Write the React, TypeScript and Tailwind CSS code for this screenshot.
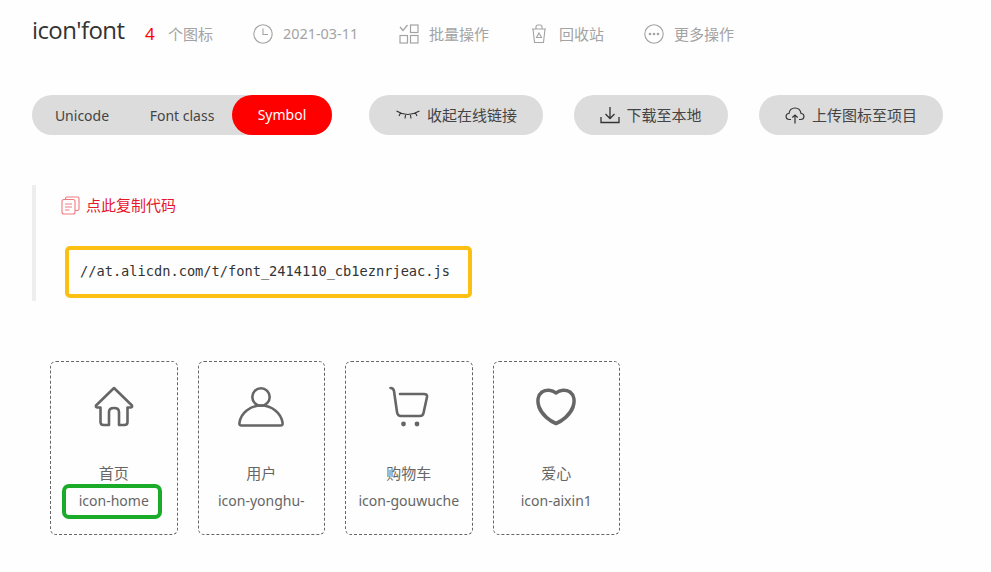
import React from "react";

const sans = "font-['Noto_Sans','Noto_Sans_CJK_SC',sans-serif]";

const cards = [
  {
    name: "首页",
    code: "icon-home",
    icon: (
      <svg width="40" height="42" viewBox="0 0 40 42" fill="none" stroke="#666" strokeWidth="2.6" strokeLinejoin="round" strokeLinecap="round">
        <path d="M20 2 L38 19.5 Q38.5 21.5 36.5 21.5 L33.5 21.5 L33.5 36 Q33.5 39 30.5 39 L25 39 L25 26 Q25 22 20 22 Q15 22 15 26 L15 39 L9.5 39 Q6.5 39 6.5 36 L6.5 21.5 L3.5 21.5 Q1.5 21.5 2 19.5 Z" />
      </svg>
    ),
  },
  {
    name: "用户",
    code: "icon-yonghu-",
    icon: (
      <svg width="46" height="42" viewBox="0 0 46 42" fill="none" stroke="#666" strokeWidth="2.6" strokeLinejoin="round">
        <circle cx="23" cy="11" r="8.7" />
        <path d="M3 39.5 Q1 39.5 1.5 36.5 C3 27 12 19.5 23 19.5 C34 19.5 43 27 44.5 36.5 Q45 39.5 43 39.5 Z" />
      </svg>
    ),
  },
  {
    name: "购物车",
    code: "icon-gouwuche",
    icon: (
      <svg width="40" height="42" viewBox="0 0 40 42" fill="none" stroke="#666" strokeWidth="2.6" strokeLinecap="round" strokeLinejoin="round">
        <path d="M1.5 2 Q4.5 2 5 5 L8 26 Q8.5 30 12 30 L31 30 Q34 30 34.5 27 L38 11 Q38.5 8 35 8 L11 8" />
        <circle cx="14.5" cy="38" r="2.4" fill="#666" stroke="none" />
        <circle cx="28" cy="38" r="2.4" fill="#666" stroke="none" />
      </svg>
    ),
  },
  {
    name: "爱心",
    code: "icon-aixin1",
    icon: (
      <svg width="40" height="38" viewBox="0 0 40 38" fill="none" stroke="#666" strokeWidth="3.6" strokeLinejoin="round">
        <path d="M20 5 C24 1.5 30 1.5 34 4 C38 7 39 13 37 19 C34 27 26 33 20 35.5 C14 33 6 27 3 19 C1 13 2 7 6 4 C10 1.5 16 1.5 20 5 Z" />
      </svg>
    ),
  },
];

export default function App() {
  return (
    <div className={`${sans} w-[991px] h-[572px] overflow-hidden bg-[#fefefe] pl-[32px] pt-[18px]`}>
      {/* header */}
      <div className="flex items-center h-[32px] text-[15px] text-[#a3a3a3]">
        <span className="mb-[8px] w-[93px] whitespace-nowrap text-[24px] leading-none text-[#333] tracking-[-0.6px] font-['Open_Sans',sans-serif]">icon'font</span>
        <span className="ml-[20px] w-[10px] text-[17px] text-[#f00]">4</span>
        <span className="ml-[13px]">个图标</span>
        <svg className="ml-[40px]" width="20" height="20" viewBox="0 0 20 20" fill="none" stroke="#a3a3a3" strokeWidth="1.1">
          <circle cx="10" cy="10" r="9.2" />
          <path d="M10 4.5 V10.5 H15" />
        </svg>
        <span className="ml-[10px] w-[75px] whitespace-nowrap text-[14.4px]">2021-03-11</span>
        <svg className="ml-[41px]" width="20" height="20" viewBox="0 0 20 20" fill="none" stroke="#a3a3a3" strokeWidth="1.2">
          <path d="M1 3 L4 6.5 L8.5 1" />
          <rect x="11.5" y="1" width="7.5" height="7.5" />
          <rect x="1" y="11.5" width="7.5" height="7.5" />
          <rect x="11.5" y="11.5" width="7.5" height="7.5" />
        </svg>
        <span className="ml-[10px]">批量操作</span>
        <svg className="ml-[42px]" width="16" height="20" viewBox="0 0 16 20" fill="none" stroke="#a3a3a3" strokeWidth="1.1">
          <path d="M1 5 H15 M2 5 L3.5 18.5 H12.5 L14 5 M5 5 V3 Q5 1 7 1 H9 Q11 1 11 3 V5" />
          <path d="M8 9 L10.5 13.5 H5.5 Z" />
        </svg>
        <span className="ml-[12px]">回收站</span>
        <svg className="ml-[40px]" width="20" height="20" viewBox="0 0 20 20" fill="none" stroke="#a3a3a3" strokeWidth="1.1">
          <circle cx="10" cy="10" r="9.2" />
          <circle cx="6" cy="10" r="0.8" fill="#a3a3a3" />
          <circle cx="10" cy="10" r="0.8" fill="#a3a3a3" />
          <circle cx="14" cy="10" r="0.8" fill="#a3a3a3" />
        </svg>
        <span className="ml-[10px]">更多操作</span>
      </div>

      {/* toolbar */}
      <div className="flex items-center mt-[45px] text-[15px] text-[#444]">
        <div className="flex items-center w-[300px] h-[40px] rounded-[20px] bg-[#dcdcdc] text-[14px]">
          <span className="w-[100px] text-center">Unicode</span>
          <span className="w-[100px] text-center">Font class</span>
          <span className="w-[100px] h-[40px] leading-[40px] text-center rounded-[20px] bg-[#f00] text-white">Symbol</span>
        </div>
        <div className="flex items-center justify-center gap-[6px] ml-[37px] w-[174px] h-[40px] rounded-[20px] bg-[#dcdcdc]">
          <svg width="26" height="12" viewBox="0 0 25 12" fill="none" stroke="#333" strokeWidth="1.1">
            <path d="M1 2 Q12 9 24 2 M5 4 L3.5 7 M10 6 L9.5 9.5 M15 6 L15.5 9.5 M20 4 L21.5 7" />
          </svg>
          <span>收起在线链接</span>
        </div>
        <div className="flex items-center justify-center gap-[6px] ml-[31px] w-[154px] h-[40px] rounded-[20px] bg-[#dcdcdc]">
          <svg width="20" height="18" viewBox="0 0 20 18" fill="none" stroke="#333" strokeWidth="1.3">
            <path d="M10 1 V12 M5.5 8 L10 12.5 L14.5 8 M1 11 V16.5 H19 V11" />
          </svg>
          <span>下载至本地</span>
        </div>
        <div className="flex items-center justify-center gap-[7px] ml-[31px] w-[184px] h-[40px] rounded-[20px] bg-[#dcdcdc]">
          <svg width="20" height="17" viewBox="0 0 20 17" fill="none" stroke="#333" strokeWidth="1.2">
            <path d="M6 12.5 H4.5 C0 12.5 0 6.5 4 6.5 C4.5 3 7 1 10 1 C13 1 15.5 3 16 6.5 C20 6.5 20 12.5 15.5 12.5 H14" />
            <path d="M10 16.5 V8 M7.3 10.5 L10 8 L12.7 10.5" />
          </svg>
          <span>上传图标至项目</span>
        </div>
      </div>

      {/* code block */}
      <div className="mt-[50px] w-[440px] h-[116px] border-l-[4px] border-[#eeeeee] pl-[25px] pt-[9px]">
        <div className="flex items-center gap-[6px] h-[22px] text-[15px] text-[#e6162d]">
          <svg width="19" height="19" viewBox="0 0 19 19" fill="none" stroke="#f07a80" strokeWidth="1.1">
            <rect x="1" y="3.5" width="13" height="14.5" rx="2" />
            <path d="M4.5 3.5 V2.5 Q4.5 1 6 1 H16.5 Q18 1 18 2.5 V13 Q18 14.5 16 14.5 H14" />
            <path d="M4 8 H11 M4 11 H11 M4 14 H8.5" />
          </svg>
          <span>点此复制代码</span>
        </div>
        <div className="flex items-center mt-[30px] ml-[4px] w-[407px] h-[52px] border-[4px] border-[#fbc011] rounded-[5px] pl-[11px] pb-[2px] font-['DejaVu_Sans_Mono',monospace] text-[13.66px] text-[#333]">
          //at.alicdn.com/t/font_2414110_cb1eznrjeac.js
        </div>
      </div>

      {/* icon cards */}
      <div className="flex gap-[20px] ml-[18px] mt-[60px]">
        {cards.map((c) => (
          <div key={c.code} className="relative flex flex-col items-center w-[127.5px] h-[174px] border border-dashed border-[#666] rounded-[6px] text-[14px] text-[#666]">
            <div className="flex items-center justify-center h-[42px] mt-[24px]">{c.icon}</div>
            <div className="mt-[35px] h-[20px] leading-[20px] text-[15px]">{c.name}</div>
            <div className="mt-[8px] h-[20px] leading-[20px] whitespace-nowrap">{c.code}</div>
            {c.code === "icon-home" && (
              <div className="absolute left-[11px] top-[122px] w-[100px] h-[35px] border-[4px] border-[#1aab29] rounded-[7px]" />
            )}
          </div>
        ))}
      </div>
    </div>
  );
}
